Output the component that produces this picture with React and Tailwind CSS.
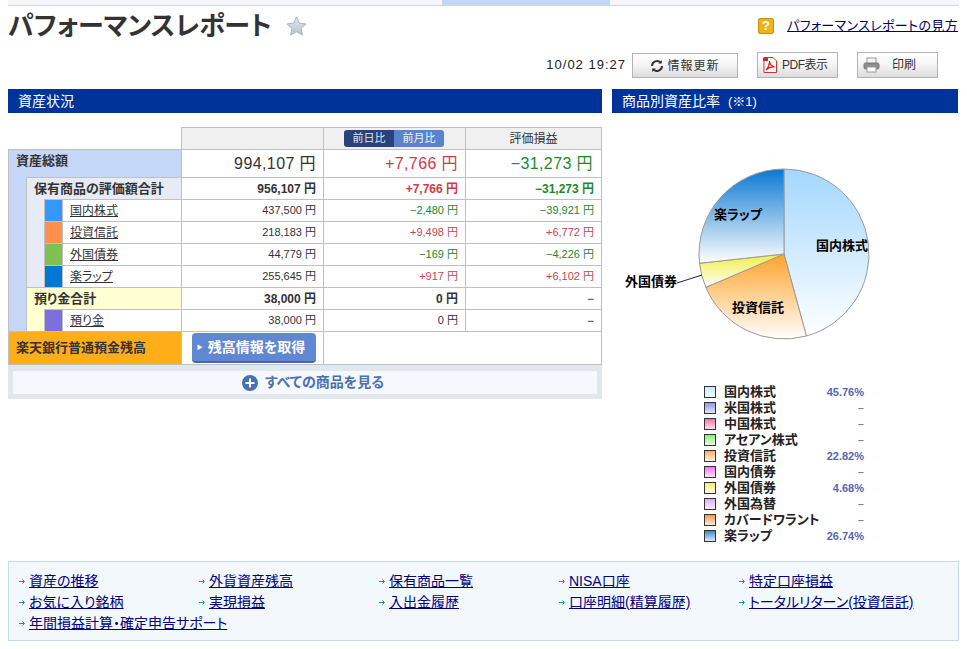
import React from "react";

const GREEN = "text-[#1a8a2a]";
const RED = "text-[#d23a46]";

const rows = [
  { name: "国内株式", color: "bg-[#3399ff]", a: "437,500", b: "−2,480", c: "−39,921" },
  { name: "投資信託", color: "bg-[#ff914d]", a: "218,183", b: "+9,498", c: "+6,772" },
  { name: "外国債券", color: "bg-[#80c050]", a: "44,779", b: "−169", c: "−4,226" },
  { name: "楽ラップ", color: "bg-[#0077d4]", a: "255,645", b: "+917", c: "+6,102" },
];

const tone = (v) => (v.startsWith("+") ? "text-[#c8454f]" : GREEN);

const pie = [
  { id: "g1", pct: 45.76, from: "#a3d7ff" },
  { id: "g2", pct: 22.82, from: "#ffa32a" },
  { id: "g3", pct: 4.68, from: "#eeee40" },
  { id: "g4", pct: 26.74, from: "#0a78d2" },
];

function slices() {
  const cx = 172, cy = 141, r = 85;
  let acc = 0;
  return pie.map((s) => {
    const a0 = (acc / 100) * 2 * Math.PI;
    acc += s.pct;
    const a1 = (acc / 100) * 2 * Math.PI;
    const x0 = cx + r * Math.sin(a0), y0 = cy - r * Math.cos(a0);
    const x1 = cx + r * Math.sin(a1), y1 = cy - r * Math.cos(a1);
    const large = a1 - a0 > Math.PI ? 1 : 0;
    return { ...s, d: `M${cx} ${cy}L${x0} ${y0}A${r} ${r} 0 ${large} 1 ${x1} ${y1}Z` };
  });
}

const legend = [
  ["国内株式", "45.76%", "from-[#c8e8ff] to-[#f2faff]"],
  ["米国株式", "−", "from-[#8a9ae0] to-[#dfe4fa]"],
  ["中国株式", "−", "from-[#ff70a8] to-[#ffdcea]"],
  ["アセアン株式", "−", "from-[#80f070] to-[#e4fde0]"],
  ["投資信託", "22.82%", "from-[#ffb050] to-[#fff0dc]"],
  ["国内債券", "−", "from-[#f070f0] to-[#fde0fd]"],
  ["外国債券", "4.68%", "from-[#f0f060] to-[#fdfde0]"],
  ["外国為替", "−", "from-[#d8b0f8] to-[#f6ecff]"],
  ["カバードワラント", "−", "from-[#ff9050] to-[#ffe8dc]"],
  ["楽ラップ", "26.74%", "from-[#2a88d8] to-[#d8ecfb]"],
];

const links = [
  "資産の推移", "外貨資産残高", "保有商品一覧", "NISA口座", "特定口座損益",
  "お気に入り銘柄", "実現損益", "入出金履歴", "口座明細(精算履歴)", "トータルリターン(投資信託)",
  "年間損益計算・確定申告サポート",
];

const Btn = ({ className = "", children }) => (
  <button className={`flex items-center border border-[#b4b4b4] bg-linear-to-b from-white via-[#f4f4f4] to-[#dcdcdc] text-[12px] text-[#333] ${className}`}>
    {children}
  </button>
);

const cell = "border border-[#c0c0c0]";
const num = `${cell} text-right pr-[7px]`;
const big = "text-[16px] tracking-[0.4px]";
const noTop = "[border-top-style:hidden]";

export default function App() {
  return (
    <div className="w-[967px] h-[649px] overflow-hidden bg-white text-[#333] [font-feature-settings:'palt'] font-['Liberation_Sans','Noto_Sans_CJK_JP',sans-serif]">
      <div className="mx-[8px] h-[6px] bg-[#f5f6f9] border-b border-[#d4d7e0] flex">
        <div className="ml-[434px] w-[168px] bg-[#c4d7f6]" />
      </div>

      <div className="h-[40px] px-[8px] flex items-center">
        <h1 className="text-[26px] leading-none font-bold text-[#333]">パフォーマンスレポート</h1>
        <svg width="21" height="20" viewBox="0 0 21 20" className="ml-[14px]">
          <defs>
            <linearGradient id="st" x1="0" y1="0" x2="0" y2="1">
              <stop offset="0" stopColor="#e4e9ee" />
              <stop offset="1" stopColor="#b6c2cc" />
            </linearGradient>
          </defs>
          <path d="M10.5 1l2.9 6.2 6.6.8-4.9 4.5 1.3 6.5-5.9-3.3-5.9 3.3 1.3-6.5L1 8l6.6-.8z" fill="url(#st)" stroke="#a9b5c0" />
        </svg>
        <div className="ml-auto flex items-center pr-px">
          <span className="w-[16px] h-[16px] rounded-[2px] bg-[#efb21a] border border-[#c98f10] text-white text-[13px] font-bold leading-[14px] text-center">?</span>
          <a className="ml-[13px] text-[13px] tracking-[0.35px] text-[#000066] underline">パフォーマンスレポートの見方</a>
        </div>
      </div>

      <div className="h-[43px] flex items-start justify-end pr-[29px] pt-[6px]">
        <span className="mr-[6px] mt-[5px] text-[13px] leading-[16px] tracking-[1px] text-[#222]">10/02 19:27</span>
        <Btn className="w-[106px] h-[25px] mt-px mr-[19px] justify-center gap-[3px] tracking-[1px]">
          <svg width="14" height="14" viewBox="0 0 14 14" fill="none" stroke="#333" strokeWidth="2">
            <path d="M2 7a5 5 0 0 1 8.6-3.4" />
            <path d="M12 7a5 5 0 0 1-8.6 3.4" />
            <path d="M11.8 1v3.6H8.2z" fill="#333" stroke="none" />
            <path d="M2.2 13V9.4h3.6z" fill="#333" stroke="none" />
          </svg>
          情報更新
        </Btn>
        <Btn className="w-[81px] h-[26px] mr-[19px] pl-[5px] gap-[5px] text-[11px] tracking-[-0.5px]">
          <svg width="14" height="16" viewBox="0 0 14 16">
            <path d="M1 .5h9l3.5 3.5v11.5H1z" fill="#fff" stroke="#c33" />
            <path d="M3 13c2-2 3.500-5 3.500-9 0 3 2 5 5 6-3-.5-6 .5-8.500 3z" fill="none" stroke="#d22" strokeWidth="1.300" />
            <rect x="0" y="1" width="5" height="3" fill="#d22" />
          </svg>
          PDF表示
        </Btn>
        <Btn className="w-[81px] h-[26px] pl-[5px] gap-[12px]">
          <svg width="17" height="16" viewBox="0 0 17 16">
            <rect x="4" y="1" width="9" height="6" fill="#f4f4f4" stroke="#999" />
            <rect x="1" y="6" width="15" height="6" rx="1.500" fill="#8d8d8d" stroke="#777" />
            <rect x="4" y="10" width="9" height="5" fill="#fff" stroke="#999" />
          </svg>
          印刷
        </Btn>
      </div>

      <div className="h-[472px] px-[8px] flex gap-[10px]">
        <section className="w-[594px]">
          <h2 className="h-[24px] bg-[#003399] text-white text-[14px] leading-[24px] pl-[10px] font-normal">資産状況</h2>
          <table className="mt-[14px] w-[593px] table-fixed border-collapse text-[12px] text-[#333]">
            <colgroup>
              <col className="w-[18px]" />
              <col className="w-[18px]" />
              <col className="w-[18px]" />
              <col className="w-[119px]" />
              <col className="w-[142px]" />
              <col className="w-[142px]" />
              <col className="w-[136px]" />
            </colgroup>
            <tbody>
              <tr className="h-[22px]">
                <td colSpan={4} className="border-0" />
                <td className={`${cell} bg-[#f0f0f0]`} />
                <td className={`${cell} bg-[#f0f0f0] p-0`}>
                  <div className="ml-[20px] w-[100px] h-[17px] rounded-[3px] overflow-hidden flex text-[11px] leading-[17px] text-center">
                    <span className="flex-1 bg-[#29427c] text-[#dfe6f5]">前日比</span>
                    <span className="flex-1 bg-[#5b82cc] text-[#eef3fb]">前月比</span>
                  </div>
                </td>
                <td className={`${cell} bg-[#f0f0f0] text-center`}>評価損益</td>
              </tr>
              <tr className="h-[28px]">
                <td colSpan={4} className={`${cell} bg-[#c5d7f7] pl-[7px] pb-[6px] text-[13px] font-bold`}>資産総額</td>
                <td className={`${num} ${big}`}>994,107 円</td>
                <td className={`${num} ${big} ${RED}`}>+7,766 円</td>
                <td className={`${num} ${big} pr-[8px] ${GREEN}`}>−31,273 円</td>
              </tr>
              <tr className="h-[22px]">
                <td rowSpan={7} className={`${cell} ${noTop} bg-[#c5d7f7]`} />
                <td colSpan={3} className={`${cell} bg-[#e6ebf6] pl-[7px] text-[13px] font-bold`}>保有商品の評価額合計</td>
                <td className={`${num} font-bold`}>956,107 円</td>
                <td className={`${num} font-bold ${RED}`}>+7,766 円</td>
                <td className={`${num} font-bold ${GREEN}`}>−31,273 円</td>
              </tr>
              {rows.map((r, i) => (
                <tr key={r.name} className="h-[22px]">
                  {i === 0 && <td rowSpan={4} className={`${cell} ${noTop} bg-[#e6ebf6]`} />}
                  <td className={`${cell} ${r.color}`} />
                  <td className={`${cell} pl-[7px]`}><a className="underline">{r.name}</a></td>
                  <td className={`${num} text-[11px]`}>{r.a} 円</td>
                  <td className={`${num} text-[11px] ${tone(r.b)}`}>{r.b} 円</td>
                  <td className={`${num} text-[11px] ${tone(r.c)}`}>{r.c} 円</td>
                </tr>
              ))}
              <tr className="h-[22px]">
                <td colSpan={3} className={`${cell} bg-[#ffffd2] pl-[7px] text-[13px] font-bold`}>預り金合計</td>
                <td className={`${num} font-bold`}>38,000 円</td>
                <td className={`${num} font-bold`}>0 円</td>
                <td className={num}>−</td>
              </tr>
              <tr className="h-[22px]">
                <td className={`${cell} ${noTop} bg-[#ffffd2]`} />
                <td className={`${cell} bg-[#7d6fdc]`} />
                <td className={`${cell} pl-[7px]`}><a className="underline">預り金</a></td>
                <td className={`${num} text-[11px]`}>38,000 円</td>
                <td className={`${num} text-[11px]`}>0 円</td>
                <td className={num}>−</td>
              </tr>
              <tr className="h-[33px]">
                <td colSpan={4} className={`${cell} bg-[#ffae1a] pl-[7px] text-[13px] font-bold`}>楽天銀行普通預金残高</td>
                <td className={`${cell} p-0`}>
                  <button className="ml-[10px] w-[124px] h-[30px] rounded-[4px] bg-[#5f87d2] border-b-2 border-[#4468a8] text-white text-[14px] font-bold flex items-center justify-center gap-[5px] pr-[6px]">
                    <span className="text-[6px]">▶</span>残高情報を取得
                  </button>
                </td>
                <td colSpan={2} className={cell} />
              </tr>
            </tbody>
          </table>
          <div className="h-[34px] bg-[#e0e8ed] px-[5px] pt-[6px]">
            <div className="h-[23px] pl-[16px] bg-[#f5f8fc] flex items-center justify-center gap-[7px] text-[14px] font-bold text-[#4a70b0]">
              <svg width="16" height="16" viewBox="0 0 16 16">
                <circle cx="8" cy="8" r="8" fill="#4a70b0" />
                <path d="M8 3.500v9M3.500 8h9" stroke="#fff" strokeWidth="2" />
              </svg>
              すべての商品を見る
            </div>
          </div>
        </section>

        <section className="w-[346px]">
          <h2 className="h-[24px] bg-[#003399] text-white text-[14px] leading-[24px] pl-[10px] font-normal">
            商品別資産比率 <span className="text-[13px] ml-[4px]">(※1)</span>
          </h2>
          <svg width="346" height="271" viewBox="0 0 346 271" className="block">
            <defs>
              {pie.map((s) => (
                <linearGradient key={s.id} id={s.id} x1="0" y1="0" x2="0" y2="1">
                  <stop offset="0" stopColor={s.from} />
                  <stop offset="1" stopColor="#ffffff" />
                </linearGradient>
              ))}
            </defs>
            {slices().map((s) => (
              <path key={s.id} d={s.d} fill={`url(#${s.id})`} stroke="#999" strokeWidth="1" />
            ))}
            <path d="M65 170L90 162" stroke="#222" strokeWidth="1" />
            <g fontSize="13" fontWeight="700" fill="#000" fontFamily="'Liberation Sans','Noto Sans CJK JP',sans-serif">
              <text x="204" y="137">国内株式</text>
              <text x="102" y="106">楽ラップ</text>
              <text x="120" y="199">投資信託</text>
              <text x="13" y="173">外国債券</text>
            </g>
          </svg>
          <ul className="ml-[92px] w-[160px]">
            {legend.map(([name, v, g]) => (
              <li key={name} className="h-[16px] flex items-center text-[13px] font-bold text-[#222] leading-[16px]">
                <span className={`w-[12px] h-[12px] border border-[#333] bg-linear-to-b ${g}`} />
                <span className="ml-[8px]">{name}</span>
                <span className={`ml-auto text-[11px] text-[#5566b8] ${v === "−" ? "font-normal" : ""}`}>{v}</span>
              </li>
            ))}
          </ul>
        </section>
      </div>

      <nav className="mx-[8px] h-[80px] bg-[#f3f8fd] border border-[#c6dbe8] pl-[9px] pt-[9px] grid grid-cols-[180px_180px_180px_180px_180px] auto-rows-[21px] text-[14px] leading-[21px]">
        {links.map((l) => (
          <div key={l} className="flex items-center whitespace-nowrap">
            <svg width="11" height="7" viewBox="0 0 11 7" className="shrink-0" fill="none" stroke="#2a8a9a" strokeWidth="1">
              <path d="M1 3.500h5M4.500 1.500l2 2-2 2" />
            </svg>
            <a className="underline text-[#000080]">{l}</a>
          </div>
        ))}
      </nav>
    </div>
  );
}
